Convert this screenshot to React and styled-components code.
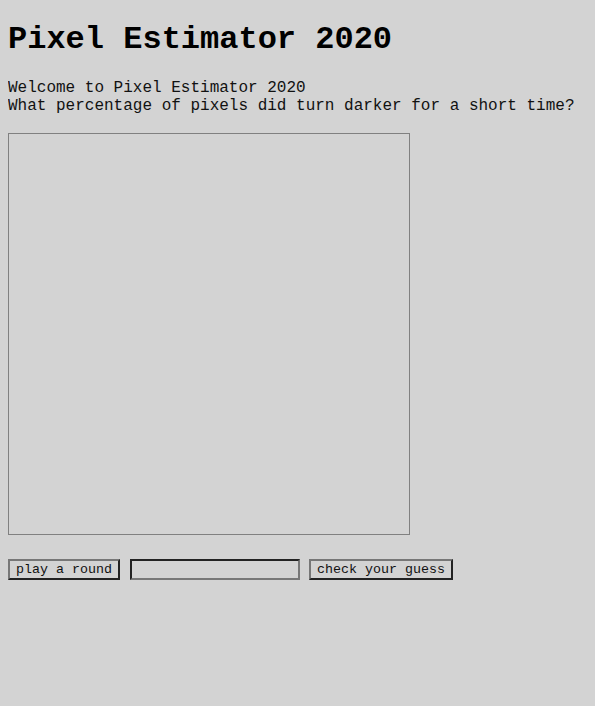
import React from "react";
import styled, { createGlobalStyle } from "styled-components";

const GlobalStyle = createGlobalStyle`
  html, body {
    background: #d3d3d3;
  }
  body {
    margin: 8px;
    font-family: "Liberation Mono", "Courier New", monospace;
    color: #111;
  }
`;

const Title = styled.h1`
  font-size: 32px;
  font-weight: bold;
  margin: 14px 0 21px;
  line-height: 36px;
  color: #000;
`;

const Intro = styled.p`
  font-size: 16px;
  line-height: 18px;
  margin: 16px 0;
`;

const Board = styled.div`
  width: 400px;
  height: 400px;
  border: 1px solid #808080;
  margin-top: 18px;
`;

const Controls = styled.div`
  display: flex;
  align-items: center;
  gap: 10px;
  margin-top: 24px;
`;

const Button = styled.button`
  font-family: "Liberation Mono", "Courier New", monospace;
  font-size: 13.33px;
  height: 21px;
  padding: 0 6px;
  background: #d3d3d3;
  color: #111;
  border: 2px solid;
  border-color: #777 #222 #222 #777;
`;

const GuessInput = styled.input`
  font-family: "Liberation Mono", "Courier New", monospace;
  font-size: 13.33px;
  width: 170px;
  height: 21px;
  box-sizing: border-box;
  margin-right: -1px;
  background: #d3d3d3;
  border: 2px solid;
  border-color: #222 #777 #777 #222;
  padding: 1px 2px;
`;

export default function App() {
  return (
    <>
      <GlobalStyle />
      <Title>Pixel Estimator 2020</Title>
      <Intro>
        Welcome to Pixel Estimator 2020
        <br />
        What percentage of pixels did turn darker for a short time?
      </Intro>
      <Board />
      <Controls>
        <Button>play a round</Button>
        <GuessInput type="text" />
        <Button>check your guess</Button>
      </Controls>
    </>
  );
}
